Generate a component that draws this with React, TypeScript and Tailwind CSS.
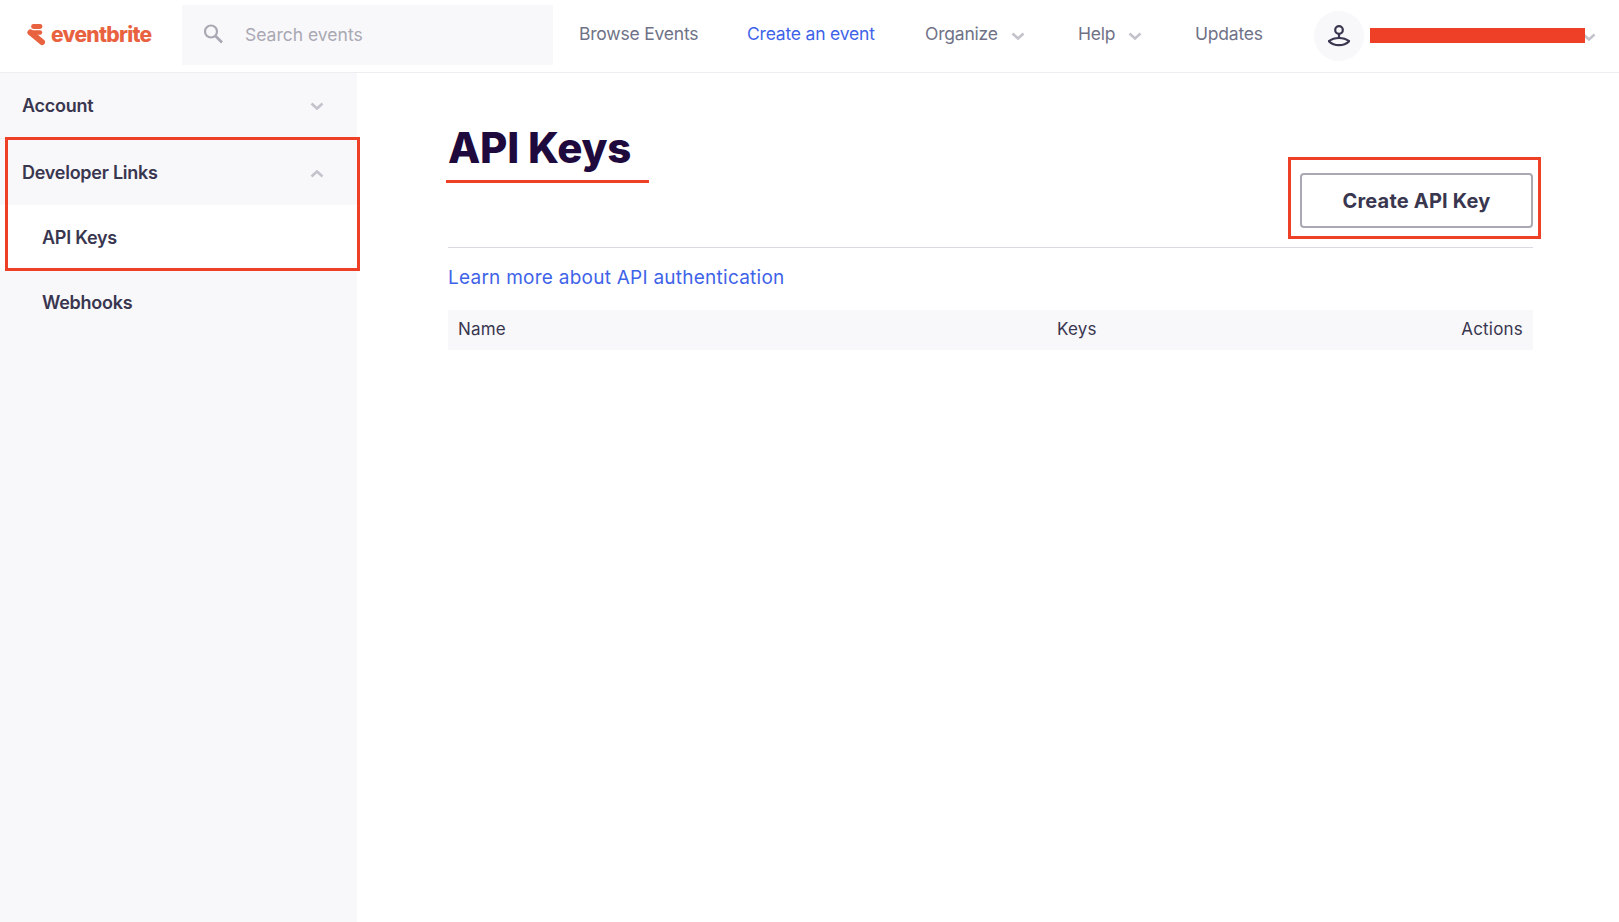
function Chevron({ up = false, className = "" }: { up?: boolean; className?: string }) {
  return (
    <svg width="14" height="9" viewBox="0 0 14 9" fill="none" className={className}>
      <path
        d={up ? "M1.5 7.5 L7 2.5 L12.5 7.5" : "M1.5 1.5 L7 6.5 L12.5 1.5"}
        stroke="#c4c3cc"
        strokeWidth="2.6"
      />
    </svg>
  );
}

function Logo() {
  return (
    <div className="flex items-center w-[182px] pl-[27px] h-full pb-[3px]">
      <svg width="19" height="22" viewBox="0 0 19 22" fill="none">
        <path d="M6.5 2.5 H13" stroke="#e8623f" strokeWidth="4.8" strokeLinecap="round" />
        <path d="M3 8.5 H13" stroke="#e8623f" strokeWidth="4.4" strokeLinecap="round" />
        <path d="M3.5 8.5 L15 18" stroke="#e8623f" strokeWidth="6" strokeLinecap="round" />
      </svg>
      <span className="ml-[5px] text-[21px] font-extrabold tracking-[-0.7px] text-[#e8623f] leading-none">
        eventbrite
      </span>
    </div>
  );
}

function NavItem({ label, width, active, menu }: { label: string; width: string; active?: boolean; menu?: boolean }) {
  return (
    <div className={`flex items-center ${width}`}>
      <span className={`text-[17.5px] tracking-[-0.2px] ${active ? "text-[#3f63e8]" : "text-[#6f7287]"}`}>{label}</span>
      {menu && <Chevron className="ml-[13px] mt-[3px]" />}
    </div>
  );
}

function SideRow({ label, open, bordered }: { label: string; open?: boolean; bordered?: boolean }) {
  return (
    <div className={`flex items-center justify-between h-[66px] pl-[22px] pr-[33px] ${bordered ? "h-[65px] border-b border-[#eeedf2]" : ""}`}>
      <span className="text-[18px] font-semibold tracking-[-0.25px] text-[#39364f]">{label}</span>
      <Chevron up={open} className="mt-[2px]" />
    </div>
  );
}

export default function App() {
  return (
    <div className="min-h-[922px] bg-white font-['Inter',sans-serif] relative overflow-hidden">
      <header className="flex h-[73px] border-b border-[#eeedf2] items-center">
        <Logo />
        <div className="flex items-center self-start mt-[5px] w-[371px] h-[60px] bg-[#f8f7fa] pl-[21px]">
          <svg width="24" height="24" viewBox="0 0 24 24" fill="none" stroke="#a9a8b3">
            <circle cx="8" cy="8.5" r="6" strokeWidth="2.2" />
            <path d="M12.5 13 L19 19.5" strokeWidth="2.6" />
          </svg>
          <span className="ml-[18px] text-[17.5px] text-[#a9a8b3]">Search events</span>
        </div>
        <div className="flex items-center ml-[26px] mb-[3px]">
          <NavItem label="Browse Events" width="w-[168px]" />
          <NavItem label="Create an event" width="w-[178px]" active />
          <NavItem label="Organize" width="w-[153px]" menu />
          <NavItem label="Help" width="w-[117px]" menu />
          <NavItem label="Updates" width="w-[119px]" />
        </div>
        <div className="flex items-center justify-center w-[50px] h-[50px] rounded-full bg-[#f8f7fa]">
          <svg width="22" height="22" viewBox="0 0 22 22" fill="none" stroke="#39364f" strokeWidth="2.2">
            <circle cx="11" cy="5" r="3.8" />
            <path d="M11 9 V13" />
            <path d="M0.8 16.2 Q5 13 11 13 Q17 13 21.2 16.2 Q17 20.2 11 20.2 Q5 20.2 0.8 16.2 Z" />
          </svg>
        </div>
        <div className="relative ml-[6px] mb-[1px] w-[215px] h-[15px] bg-[#ee4026]" />
        <Chevron className="-ml-[3px] mt-[3px]" />
      </header>

      <div className="flex min-h-[849px]">
        <aside className="w-[357px] shrink-0 bg-[#f8f7fa]">
          <SideRow label="Account" bordered />
          <SideRow label="Developer Links" open />
          <div className="flex items-center h-[65px] pl-[42px] bg-white text-[18px] font-semibold tracking-[-0.25px] text-[#39364f]">
            API Keys
          </div>
          <div className="flex items-center h-[65px] pl-[42px] text-[18px] font-semibold tracking-[-0.25px] text-[#39364f]">
            Webhooks
          </div>
        </aside>

        <main className="flex-1 pl-[91px] pr-[86px]">
          <div className="flex items-start justify-between h-[175px] border-b border-[#dbdae3]">
            <h1 className="mt-[46px] text-[42px] leading-[58px] font-extrabold tracking-[-0.2px] text-[#1e0a3c]">
              API Keys
            </h1>
            <button className="mt-[100px] w-[233px] h-[55px] rounded-[4px] border-2 border-[#a9a8b3] text-[20px] font-bold tracking-[0.2px] text-[#39364f]">
              Create API Key
            </button>
          </div>
          <a className="block mt-[16px] text-[19px] leading-[28px] tracking-[0.25px] text-[#3f63e8]">
            Learn more about API authentication
          </a>
          <div className="flex items-center h-[40px] mt-[18px] bg-[#f8f7fa] px-[10px] text-[17px] tracking-[0.2px] text-[#39364f]">
            <span className="w-[599px]">Name</span>
            <span>Keys</span>
            <span className="ml-auto">Actions</span>
          </div>
        </main>
      </div>

      {/* annotation overlays */}
      <div className="absolute left-[5px] top-[137px] w-[355px] h-[134px] border-[3px] border-[#ee4026]" />
      <div className="absolute left-[1288px] top-[157px] w-[253px] h-[82px] border-[3px] border-[#ee4026]" />
      <div className="absolute left-[446px] top-[180px] w-[203px] h-[3px] bg-[#ee4026]" />
    </div>
  );
}
